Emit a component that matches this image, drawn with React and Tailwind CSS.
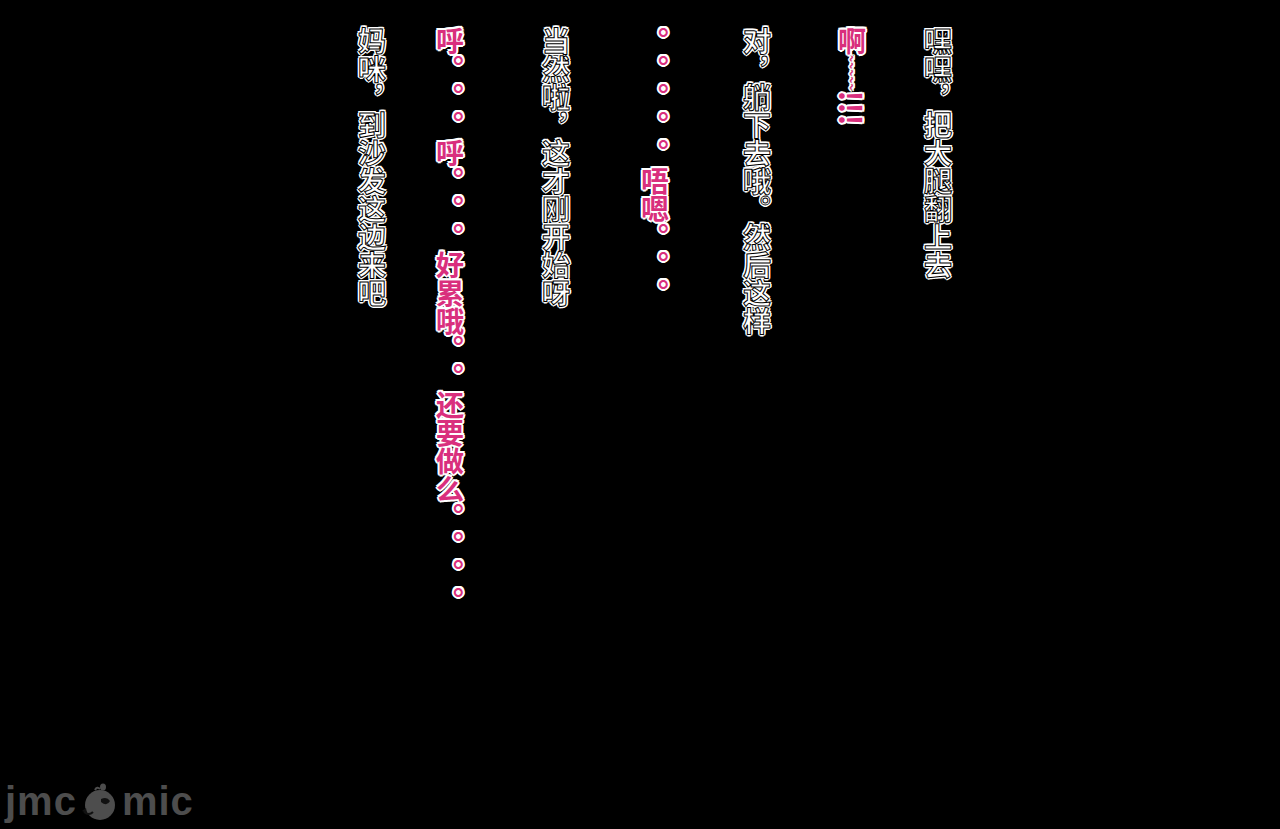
import React from "react";

const font = { fontFamily: '"Noto Sans CJK SC", "Noto Sans", sans-serif' };

function Col({ pink, className = "", children }) {
  return (
    <div
      style={font}
      className={
        "[writing-mode:vertical-rl] [text-spacing-trim:space-all] text-[28px] leading-[30px] w-[30px] font-bold " +
        (pink
          ? "text-[#d92f7d] [text-shadow:2px_0_0_#fff,-2px_0_0_#fff,0_2px_0_#fff,0_-2px_0_#fff,1.5px_1.5px_0_#fff,-1.5px_-1.5px_0_#fff,1.5px_-1.5px_0_#fff,-1.5px_1.5px_0_#fff] "
          : "text-white [-webkit-text-stroke:1px_#000] [text-shadow:2px_0_0_#fff,-2px_0_0_#fff,0_2px_0_#fff,0_-2px_0_#fff,1.5px_1.5px_0_#fff,-1.5px_-1.5px_0_#fff,1.5px_-1.5px_0_#fff,-1.5px_1.5px_0_#fff] ") +
        className
      }
    >
      {children}
    </div>
  );
}

function Logo() {
  return (
    <div
      className="flex items-center text-[#4d4d4d] font-bold text-[40px] leading-none tracking-[1px]"
      style={{ fontFamily: '"Liberation Sans", Arial, sans-serif' }}
    >
      <span>jmc</span>
      <svg width="38" height="40" viewBox="0 0 36 40" className="ml-[3px] mr-[4px]">
        <circle cx="19" cy="24" r="15" fill="#4d4d4d" />
        <ellipse cx="22" cy="6" rx="3" ry="3.5" fill="#4d4d4d" />
        <path d="M14 9 q2 -4 5 -1" stroke="#4d4d4d" strokeWidth="2" fill="none" />
        <path d="M20 18 q6 -3 9 2 q-3 6 -9 1 z" fill="#111" />
        <path d="M5 27 l-4 3 l5 2 z" fill="#111" />
        <path d="M3 31 q5 4 9 0" stroke="#111" strokeWidth="2" fill="none" />
      </svg>
      <span>mic</span>
    </div>
  );
}

export default function App() {
  return (
    <div className="w-[1280px] h-[829px] bg-black overflow-hidden flex flex-col justify-between">
      <div className="flex items-start pl-[357px] pt-[27px]">
        <Col>妈咪，到沙发这边来吧</Col>
        <Col pink className="ml-[48px]">
          呼。。。呼。。。好累哦。。还要做么。。。。
        </Col>
        <Col className="ml-[76px]">当然啦，这才刚开始呀</Col>
        <Col pink className="ml-[69px]">
          。。。。。唔嗯。。。
        </Col>
        <Col className="ml-[72px]">对，躺下去哦。然后这样</Col>
        <Col pink className="ml-[65px]">
          啊<span className="text-[12px]">~~~~~</span>
          <span className="text-[30px] tracking-[1px]">!!!</span>
        </Col>
        <Col className="ml-[56px]">嘿嘿，把大腿翻上去</Col>
      </div>
      <div className="pl-[5px] pb-[8px]">
        <Logo />
      </div>
    </div>
  );
}
